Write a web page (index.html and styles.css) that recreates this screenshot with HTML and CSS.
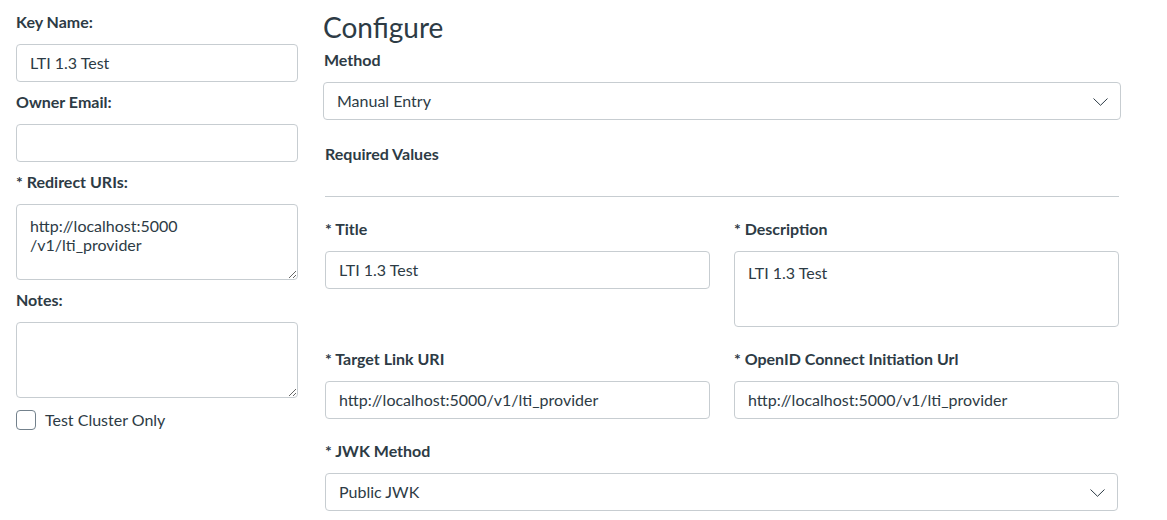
FILE: index.html
```html
<!DOCTYPE html>
<html>
<head>
<meta charset="utf-8">
<link rel="stylesheet" href="styles.css">
</head>
<body>
<div class="page">
  <div class="left">
    <label class="lbl">Key Name:</label>
    <input class="inp" type="text" value="LTI 1.3 Test">
    <label class="lbl">Owner Email:</label>
    <input class="inp" type="text" value="">
    <label class="lbl">* Redirect URIs:</label>
    <textarea class="ta">http://localhost:5000
/v1/lti_provider</textarea>
    <label class="lbl">Notes:</label>
    <textarea class="ta"></textarea>
    <div class="check">
      <span class="box"></span>
      <span class="check-text">Test Cluster Only</span>
    </div>
  </div>
  <div class="right">
    <h1 class="title">Configure</h1>
    <div class="lbl">Method</div>
    <div class="select">
      <span>Manual Entry</span>
      <svg class="chev" width="15" height="8" viewBox="0 0 15 8"><path d="M0.5 0.5 L7.5 7.3 L14.5 0.5" fill="none" stroke="#2d3b45" stroke-width="1"/></svg>
    </div>
    <div class="section">
      <div class="lbl sec-title">Required Values</div>
      <hr class="rule">
      <div class="grid">
        <div class="field">
          <div class="lbl">* Title</div>
          <input class="inp" type="text" value="LTI 1.3 Test">
        </div>
        <div class="field">
          <div class="lbl">* Description</div>
          <textarea class="ta ta-desc">LTI 1.3 Test</textarea>
        </div>
        <div class="field">
          <div class="lbl">* Target Link URI</div>
          <input class="inp" type="text" value="http://localhost:5000/v1/lti_provider">
        </div>
        <div class="field">
          <div class="lbl">* OpenID Connect Initiation Url</div>
          <input class="inp" type="text" value="http://localhost:5000/v1/lti_provider">
        </div>
      </div>
      <div class="lbl jwk-lbl">* JWK Method</div>
      <div class="select">
        <span>Public JWK</span>
        <svg class="chev" width="15" height="8" viewBox="0 0 15 8"><path d="M0.5 0.5 L7.5 7.3 L14.5 0.5" fill="none" stroke="#2d3b45" stroke-width="1"/></svg>
      </div>
    </div>
  </div>
</div>
</body>
</html>
```
FILE: styles.css
```css
html, body {
  margin: 0;
  padding: 0;
  background: #ffffff;
}
body {
  font-family: Lato, "Open Sans", sans-serif;
  color: #2d3b45;
  font-size: 16px;
}
.page {
  display: flex;
  gap: 25px;
  padding: 12px 0 0 16px;
  width: 1120px;
}
.left {
  width: 282px;
  display: flex;
  flex-direction: column;
}
.lbl {
  display: block;
  font-weight: 700;
  font-size: 16px;
  line-height: 20px;
  height: 20px;
  margin-bottom: 12px;
  color: #2d3b45;
}
.inp {
  box-sizing: border-box;
  width: 100%;
  height: 38px;
  border: 1px solid #c7cdd1;
  border-radius: 4px;
  padding: 0 13px 2px 13px;
  font-family: Lato, sans-serif;
  font-size: 16px;
  color: #2d3b45;
  margin: 0 0 10px 0;
  background: #fff;
  outline: none;
}
.ta {
  box-sizing: border-box;
  display: block;
  width: 100%;
  height: 76px;
  border: 1px solid #c7cdd1;
  border-radius: 4px;
  padding: 11px 13px;
  font-family: Lato, sans-serif;
  font-size: 16px;
  line-height: 19px;
  color: #2d3b45;
  margin: 0 0 10px 0;
  resize: vertical;
  background: #fff;
  outline: none;
}
.ta-desc {
  resize: none;
}
.check {
  display: flex;
  align-items: center;
  gap: 9px;
  margin-top: 2px;
}
.box {
  box-sizing: border-box;
  width: 20px;
  height: 20px;
  border: 1px solid #73818c;
  border-radius: 4px;
  background: #fff;
}
.check-text {
  font-size: 16px;
  line-height: 20px;
}
.right {
  width: 798px;
  display: flex;
  flex-direction: column;
}
.title {
  margin: -5px 0 3px 0;
  font-weight: 400;
  font-size: 28px;
  line-height: 40px;
  height: 40px;
  color: #2d3b45;
}
.right > .lbl {
  margin-left: 1px;
}
.select {
  box-sizing: border-box;
  height: 38px;
  border: 1px solid #c7cdd1;
  border-radius: 4px;
  display: flex;
  align-items: center;
  justify-content: space-between;
  padding: 0 12px 2px 13px;
  font-size: 16px;
  background: #fff;
}
.chev {
  display: block;
  margin-top: 3px;
}
.section {
  padding: 0 2px;
  margin-top: 24px;
  display: flex;
  flex-direction: column;
}
.sec-title {
  margin-bottom: 0;
}
.rule {
  border: 0;
  border-top: 1px solid #c7cdd1;
  margin: 32px 0 22px 0;
  height: 0;
}
.grid {
  display: grid;
  grid-template-columns: 1fr 1fr;
  column-gap: 24px;
  row-gap: 12px;
}
.jwk-lbl {
  margin-top: 12px;
}
.section > .select {
  margin-right: 1px;
}
```
